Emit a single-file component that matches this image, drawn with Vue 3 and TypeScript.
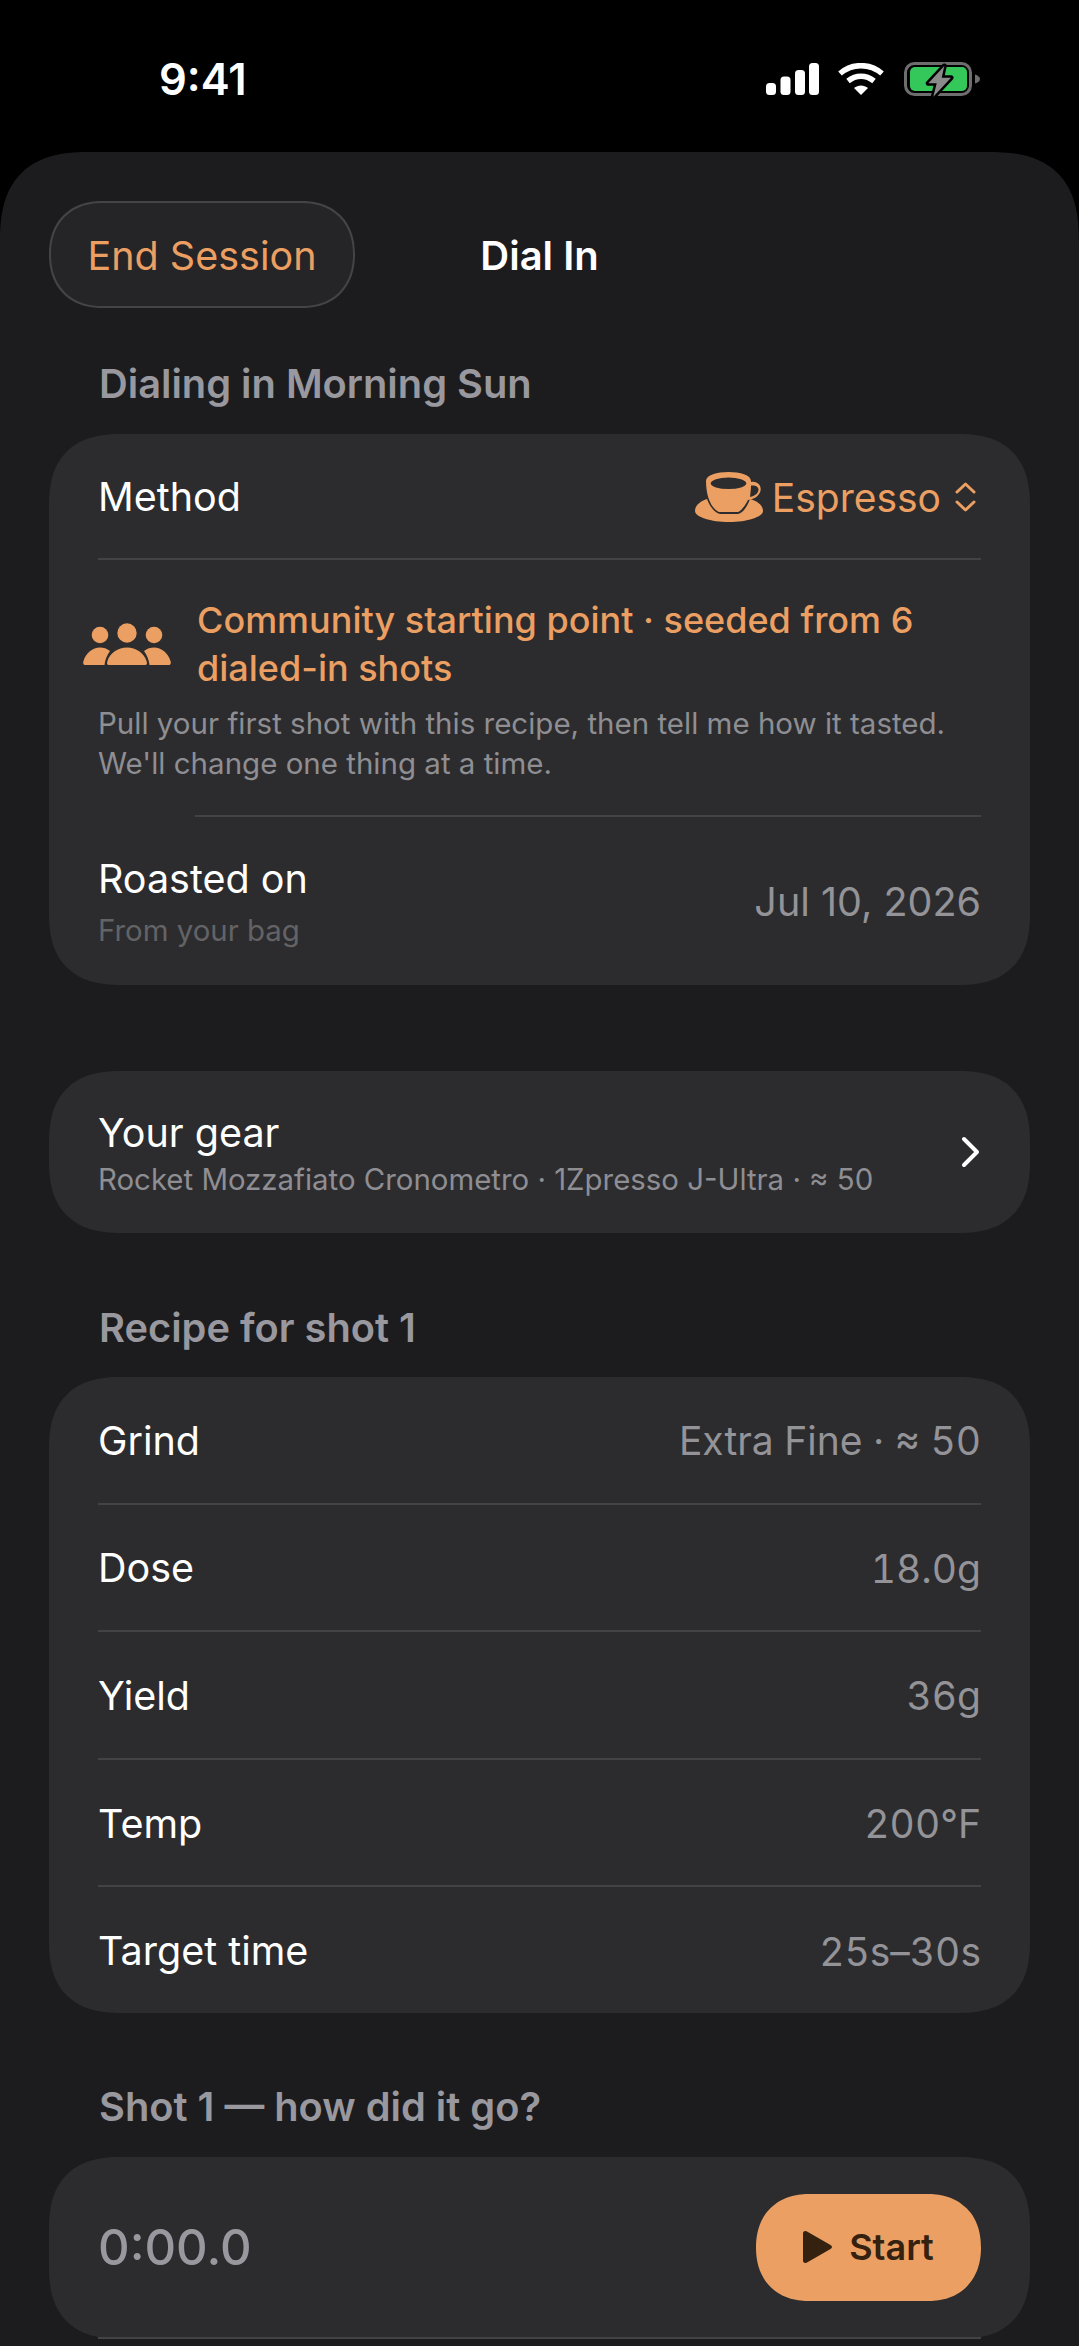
<script setup lang="ts">
const recipe = [
  { label: 'Grind', value: 'Extra Fine · ≈ 50' },
  { label: 'Dose', value: '18.0g' },
  { label: 'Yield', value: '36g' },
  { label: 'Temp', value: '200°F' },
  { label: 'Target time', value: '25s–30s' },
]
</script>

<template>
  <div class="phone">
    <header class="status">
      <span class="clock">9:41</span>
      <div class="status-icons">
        <svg width="53" height="32" viewBox="0 0 53 32" fill="#fff">
          <rect x="0" y="20" width="10" height="12" rx="3.5" />
          <rect x="14.5" y="13.5" width="10" height="18.5" rx="3.5" />
          <rect x="29" y="7" width="10" height="25" rx="3.5" />
          <rect x="43" y="0" width="10" height="32" rx="3.5" />
        </svg>
        <svg width="46" height="32" viewBox="0 0 46 32" fill="none" stroke="#fff" stroke-width="5.5">
          <path d="M2 10.5 C14 0 32 0 44 10.5" />
          <path d="M10 18 C18 11.5 28 11.5 36 18" />
          <path d="M16 25 L23 32 L30 25 C26 21.5 20 21.5 16 25Z" fill="#fff" stroke="none" />
        </svg>
        <svg width="77" height="38" viewBox="0 0 77 38">
          <rect x="2.5" y="3.5" width="65" height="31" rx="9" fill="none" stroke="#6e6e6e" stroke-width="3" />
          <rect x="7" y="7" width="57" height="24" rx="5" fill="#34c759" />
          <path d="M72 14.5 C75 15.5 77 17 77 19 C77 21 75 22.5 72 23.5Z" fill="#6e6e6e" />
          <path d="M41.3 6 L25.3 23.3 H33.7 L30.3 36.7 L48 17.7 H38.7 Z" fill="#8a8a8a" stroke="#000" stroke-width="5" stroke-linejoin="round" paint-order="stroke" />
        </svg>
      </div>
    </header>

    <main class="sheet">
      <nav class="nav">
        <button class="end-btn">End Session</button>
        <span class="nav-title">Dial In</span>
      </nav>

      <h2 class="section-title first">Dialing in Morning Sun</h2>
      <section class="card">
        <div class="row method-row">
          <span class="label">Method</span>
          <span class="method-value">
            <svg width="68" height="50" viewBox="0 0 68 50" fill="#eb9f62">
              <path fill-rule="evenodd" d="M11 9 C11 3 22 0 33.5 0 C45 0 56 3 56 9 L56 10 C61 9 65.7 12 65.7 17 C65.7 23 60 27 53 28 C50 34 46 39 43 40 H24 C15 36 11 22 11 9Z M15.7 11.3 A17.8 5.8 0 0 0 51.3 11.3 A17.8 5.8 0 0 0 15.7 11.3Z M56 13.5 C56 17 55.5 21 55 25 C60 24 63.5 21 63.5 17.5 C63.5 14.5 60 13 56 13.5Z" />
              <path d="M0 39 C0 33 6 29 12 27 C15 35 20 41 25 42 H43 C48 41 52 35 55 27 C62 29 68 33 68 39 C68 45 52 50 34 50 C16 50 0 45 0 39Z" />
            </svg>
            <span>Espresso</span>
            <svg class="chev" width="21" height="30" viewBox="0 0 21 30" fill="none" stroke="#eb9f62" stroke-width="3" stroke-linecap="round" stroke-linejoin="round">
              <path d="M2 10 L10.5 2 L19 10" />
              <path d="M2 20 L10.5 28 L19 20" />
            </svg>
          </span>
        </div>
        <div class="divider"></div>
        <div class="community">
          <div class="community-head">
            <svg class="people" width="88" height="42" viewBox="0 0 88 42" fill="#eb9f62">
              <circle cx="17" cy="12" r="8.3" />
              <circle cx="44" cy="10" r="9.7" />
              <circle cx="71" cy="12" r="8.3" />
              <path d="M2.5 42 C0.5 42 -0.3 40.3 0.5 38 C3 30 9.5 24.5 17 24.5 C20.5 24.5 24 25.5 27 28 C24 32 22 37 21.5 42Z" />
              <path d="M26 42 C24 42 23.5 40.5 24.5 38 C27 30 35 24.5 44 24.5 C53 24.5 61 30 63.5 38 C64.5 40.5 64 42 62 42Z" />
              <path d="M85.5 42 C87.5 42 88.3 40.3 87.5 38 C85 30 78.5 24.5 71 24.5 C67.5 24.5 64 25.5 61 28 C64 32 66 37 66.5 42Z" />
            </svg>
            <span class="community-title">Community starting point · seeded from 6 dialed-in shots</span>
          </div>
          <p class="community-note">Pull your first shot with this recipe, then tell me how it tasted. We'll change one thing at a time.</p>
        </div>
        <div class="divider inset"></div>
        <div class="row roasted-row">
          <div>
            <div class="label">Roasted on</div>
            <div class="hint">From your bag</div>
          </div>
          <span class="value date">Jul 10, 2026</span>
        </div>
      </section>

      <section class="card gear">
        <div class="gear-text">
          <div class="label">Your gear</div>
          <div class="gear-sub">Rocket Mozzafiato Cronometro · 1Zpresso J-Ultra · ≈ 50</div>
        </div>
        <svg class="gear-chev" width="20" height="32" viewBox="0 0 20 32" fill="none" stroke="#fff" stroke-width="4" stroke-linecap="round" stroke-linejoin="round">
          <path d="M4 3 L17 16 L4 29" />
        </svg>
      </section>

      <h2 class="section-title">Recipe for shot 1</h2>
      <section class="card">
        <template v-for="(item, i) in recipe" :key="item.label">
          <div v-if="i > 0" class="divider"></div>
          <div class="row recipe-row">
            <span class="label">{{ item.label }}</span>
            <span class="value">{{ item.value }}</span>
          </div>
        </template>
      </section>

      <h2 class="section-title shot">Shot 1 — how did it go?</h2>
      <section class="card">
        <div class="row timer-row">
          <span class="timer">0:00.0</span>
          <button class="start-btn">
            <svg width="29" height="32" viewBox="0 0 29 32" fill="#34210f">
              <path d="M0 2.5 C0 0.3 2.2 -0.7 4 0.5 L27.5 14 C29.5 15.2 29.5 16.8 27.5 18 L4 31.5 C2.2 32.7 0 31.7 0 29.5Z" />
            </svg>
            <span>Start</span>
          </button>
        </div>
        <div class="divider"></div>
      </section>
    </main>
  </div>
</template>

<style>
html, body {
  margin: 0;
  background: #000;
}
</style>

<style scoped>
.phone {
  width: 1079px;
  height: 2346px;
  overflow: hidden;
  background: #000;
  font-family: Inter, "Liberation Sans", sans-serif;
  color: #fff;
}

.status {
  height: 152px;
  box-sizing: border-box;
  padding: 54px 99px 0 159px;
  display: flex;
  justify-content: space-between;
  align-items: flex-start;
}

.clock {
  font-size: 43.5px;
  line-height: 50px;
  font-weight: 600;
}

.status-icons {
  display: flex;
  align-items: center;
  gap: 19px;
  padding-top: 6px;
}

.sheet {
  height: 2194px;
  box-sizing: border-box;
  padding: 49px 49px 0;
  background: #1c1c1e;
  border-radius: 92px 92px 0 0;
  corner-shape: superellipse(1.4);
}

.nav {
  position: relative;
  height: 107px;
  display: flex;
  align-items: center;
  justify-content: center;
}

.end-btn {
  position: absolute;
  left: 0;
  top: 0;
  width: 306px;
  height: 107px;
  padding: 2px 0 0;
  border: 2px solid #444447;
  border-radius: 53.5px;
  corner-shape: superellipse(1.15);
  background: #252527;
  color: #eb9f62;
  font: 400 39.5px Inter, sans-serif;
}

.nav-title {
  padding-top: 2px;
  font-size: 40px;
  font-weight: 600;
}

.section-title {
  margin: 71px 0 25px;
  padding-left: 50px;
  font-size: 39.8px;
  line-height: 48px;
  font-weight: 600;
  color: #98989e;
}

.section-title.first {
  margin: 52px 0 26px;
}

.section-title.shot {
  margin: 70.5px 0 26px;
}

.card {
  background: #2c2c2e;
  border-radius: 72px;
  corner-shape: superellipse(1.3);
  padding: 0 49px;
}

.row {
  display: flex;
  justify-content: space-between;
  align-items: center;
}

.label {
  font-size: 39.5px;
  line-height: 48px;
}

.value {
  font-size: 39px;
  font-variant-numeric: tabular-nums;
  color: #939398;
}

.value.date {
  font-size: 39.5px;
  font-variant-numeric: normal;
}

.divider {
  height: 2px;
  background: #434345;
}

.divider.inset {
  margin-left: 97px;
}

.method-row {
  height: 124px;
  padding-top: 2px;
  box-sizing: border-box;
}

.recipe-row {
  height: 125.6px;
  padding-top: 2px;
  box-sizing: border-box;
}

.method-value {
  display: flex;
  align-items: center;
  gap: 9px;
  padding-right: 5px;
  font-size: 39px;
  color: #eb9f62;
}

.chev {
  margin-left: 5px;
}

.community {
  padding: 36px 0 32px;
}

.community-head {
  display: flex;
  align-items: center;
  gap: 26px;
  margin-left: -15px;
}

.people {
  flex: none;
}

.community-title {
  font-size: 36px;
  line-height: 48px;
  font-weight: 500;
  color: #eb9f62;
}

.community-note {
  margin: 11px 0 0;
  font-size: 29.5px;
  line-height: 40px;
  color: #8e8e93;
}

.roasted-row {
  height: 168px;
  padding-top: 2px;
  box-sizing: border-box;
}

.hint {
  margin-top: 10px;
  font-size: 29.4px;
  line-height: 36px;
  color: #636366;
}

.gear {
  margin-top: 86px;
  height: 162px;
  display: flex;
  align-items: center;
  justify-content: space-between;
}

.gear-text {
  padding-top: 3px;
}

.gear-sub {
  margin-top: 5px;
  font-size: 29.4px;
  line-height: 36px;
  color: #8e8e93;
}

.gear-chev {
  margin-right: 1px;
}

.timer-row {
  height: 180px;
}

.timer {
  font-size: 49px;
  font-weight: 500;
  color: #98989e;
}

.start-btn {
  width: 225px;
  height: 107px;
  border: 0;
  border-radius: 53.5px;
  corner-shape: superellipse(1.15);
  background: #eb9f62;
  color: #34210f;
  display: flex;
  align-items: center;
  justify-content: center;
  gap: 17px;
  padding: 0;
  font: 600 36px Inter, sans-serif;
}
</style>
